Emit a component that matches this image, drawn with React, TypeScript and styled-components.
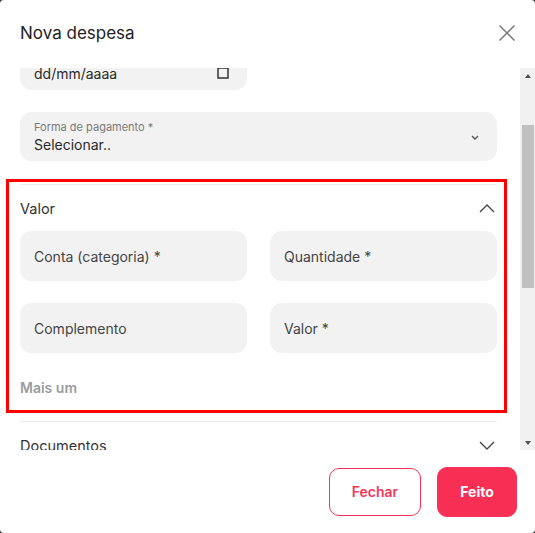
import { useLayoutEffect, useRef, useState } from "react";
import styled, { createGlobalStyle } from "styled-components";

const GlobalStyle = createGlobalStyle`
  * {
    box-sizing: border-box;
  }
  body {
    margin: 0;
    background: #3a3a3a;
    font-family: Inter, "Noto Sans", sans-serif;
  }
`;

export const Modal = styled.div`
  display: flex;
  flex-direction: column;
  width: 535px;
  height: 533px;
  background: #fff;
  border-radius: 4px;
  overflow: hidden;
`;

export const Header = styled.div`
  display: flex;
  align-items: center;
  justify-content: space-between;
  height: 68px;
  padding: 0 19px 3px 20px;
  flex-shrink: 0;
`;

export const Title = styled.h2`
  margin: 0;
  font-size: 17px;
  font-weight: 400;
  color: #222;
`;

export const CloseBtn = styled.button`
  display: flex;
  padding: 0;
  border: none;
  background: none;
  cursor: pointer;
`;

export const BodyRow = styled.div`
  display: flex;
  flex: 1;
  min-height: 0;
`;

export const Body = styled.div`
  flex: 1;
  overflow: hidden;
  padding: 0 23px 0 20px;
`;

export const Rail = styled.div`
  display: flex;
  flex-direction: column;
  width: 15px;
  flex-shrink: 0;
  background: #f1f1f1;
`;

export const RailBtn = styled.div<{ $down?: boolean }>`
  display: flex;
  align-items: center;
  justify-content: center;
  height: 15px;
  padding-left: 1px;

  &::before {
    content: "";
    border-left: 3.5px solid transparent;
    border-right: 3.5px solid transparent;
    ${(p) => (p.$down ? "border-top: 4px solid #505050;" : "border-bottom: 4px solid #505050;")}
  }
`;

export const Track = styled.div`
  position: relative;
  flex: 1;
`;

export const Thumb = styled.div`
  position: absolute;
  left: 2px;
  right: 1px;
  background: #c1c1c1;
`;

export const Stack = styled.div`
  display: flex;
  flex-direction: column;
  gap: 22px;
`;

export const Grid = styled.div`
  display: grid;
  grid-template-columns: 1fr 1fr;
  gap: 22px 23px;
`;

export const Field = styled.div<{ $tall?: boolean }>`
  display: flex;
  align-items: center;
  justify-content: space-between;
  height: ${(p) => (p.$tall ? "49px" : "50px")};
  padding: 0 18px 0 14px;
  border-radius: 12px;
  background: #f2f2f2;
  color: #444;
  font-size: 14px;
`;

export const FieldText = styled.div`
  display: flex;
  flex-direction: column;
  justify-content: center;
`;

export const Label = styled.span`
  font-size: 11px;
  line-height: 15px;
  color: #7a7a7a;
`;

export const Value = styled.span`
  font-size: 14px;
  line-height: 19px;
  color: #2a2a2a;
`;

export const IconSlot = styled.span<{ $offset?: number }>`
  display: flex;
  margin-top: ${(p) => p.$offset ?? 0}px;
`;

export const Section = styled.div<{ $gapAbove?: boolean }>`
  margin-top: ${(p) => (p.$gapAbove ? "23px" : "0")};
  border-top: 1px solid #ececec;
`;

export const Highlight = styled.div`
  position: relative;

  &::after {
    content: "";
    position: absolute;
    top: -6px;
    left: -14px;
    right: -10px;
    bottom: 8px;
    border: 3px solid #ff0000;
    pointer-events: none;
  }
`;

export const SectionHead = styled.div`
  display: flex;
  align-items: center;
  justify-content: space-between;
  height: 46px;
  padding-right: 2px;
  font-size: 14.5px;
  color: #333;
`;

export const AddMore = styled.div`
  padding: 23px 0 21px;
  font-size: 14px;
  line-height: 24px;
  font-weight: 600;
  color: #9b9b9b;
`;

export const Dropzone = styled.div`
  height: 140px;
  margin-bottom: 22px;
  border: 1px dashed #d5d5d5;
  border-radius: 12px;
`;

export const Spacer = styled.div`
  height: 70px;
`;

export const Footer = styled.div`
  display: flex;
  align-items: center;
  justify-content: flex-end;
  gap: 16px;
  height: 83px;
  padding: 0 18px 0 0;
  flex-shrink: 0;
`;

export const Button = styled.button<{ $primary?: boolean }>`
  width: ${(p) => (p.$primary ? "80px" : "92px")};
  height: ${(p) => (p.$primary ? "50px" : "48px")};
  border-radius: 10px;
  border: 1px solid #f4345a;
  background: ${(p) => (p.$primary ? "#f72f55" : "#fff")};
  color: ${(p) => (p.$primary ? "#fff" : "#f0385c")};
  font-family: Inter, "Noto Sans", sans-serif;
  font-size: 14px;
  font-weight: ${(p) => (p.$primary ? 700 : 600)};
  cursor: pointer;
`;

const Chevron = ({ up, small }: { up?: boolean; small?: boolean }) =>
  small ? (
    <svg width="8" height="5" viewBox="0 0 8 5" fill="none">
      <path d="M1 1l3 3 3-3" stroke="#555" strokeWidth="1.4" />
    </svg>
  ) : (
    <svg width="16" height="9" viewBox="0 0 16 9" fill="none">
      <path d={up ? "M1 8l7-7 7 7" : "M1 1l7 7 7-7"} stroke="#444" strokeWidth="1.3" />
    </svg>
  );

export default function App() {
  const bodyRef = useRef<HTMLDivElement>(null);
  const trackRef = useRef<HTMLDivElement>(null);
  const [thumb, setThumb] = useState({ top: 0, height: 0 });

  useLayoutEffect(() => {
    const body = bodyRef.current;
    const track = trackRef.current;
    if (!body || !track) return;
    body.scrollTop = 99;
    const trackLen = track.clientHeight;
    const height = Math.round((trackLen * body.clientHeight) / body.scrollHeight);
    const maxScroll = body.scrollHeight - body.clientHeight;
    const top = Math.round(((trackLen - height) * body.scrollTop) / maxScroll);
    setThumb({ top, height });
  }, []);

  return (
    <>
      <GlobalStyle />
      <Modal>
        <Header>
          <Title>Nova despesa</Title>
          <CloseBtn>
            <svg width="18" height="18" viewBox="0 0 18 18" fill="none">
              <path d="M1.5 1.5l15 15M16.5 1.5l-15 15" stroke="#7a7a7a" strokeWidth="1.5" />
            </svg>
          </CloseBtn>
        </Header>

        <BodyRow>
          <Body ref={bodyRef}>
            <Stack>
              <Grid>
                <Field>Descrição *</Field>
                <Field>Fornecedor</Field>
                <Field $tall>
                  <FieldText>
                    <Label>Data *</Label>
                    <Value>dd/mm/aaaa</Value>
                  </FieldText>
                  <IconSlot $offset={14}>
                    <svg width="12" height="12" viewBox="0 0 12 12" fill="none">
                      <rect x="1" y="1" width="10" height="10" stroke="#333" strokeWidth="1.5" />
                    </svg>
                  </IconSlot>
                </Field>
              </Grid>

              <Field $tall>
                <FieldText>
                  <Label>Forma de pagamento *</Label>
                  <Value>Selecionar..</Value>
                </FieldText>
                <IconSlot $offset={1}>
                  <Chevron small />
                </IconSlot>
              </Field>
            </Stack>

            <Section $gapAbove>
              <Highlight>
                <SectionHead>
                  Valor
                  <Chevron up />
                </SectionHead>
                <Grid>
                  <Field>Conta (categoria) *</Field>
                  <Field>Quantidade *</Field>
                  <Field>Complemento</Field>
                  <Field>Valor *</Field>
                </Grid>
                <AddMore>Mais um</AddMore>
              </Highlight>
            </Section>

            <Section>
              <SectionHead>
                Documentos
                <Chevron />
              </SectionHead>
              <Dropzone />
            </Section>

            <Section>
              <SectionHead>
                Observações
                <Chevron />
              </SectionHead>
            </Section>

            <Section>
              <SectionHead>
                Rateio
                <Chevron />
              </SectionHead>
            </Section>

            <Spacer />
          </Body>

          <Rail>
            <RailBtn />
            <Track ref={trackRef}>
              <Thumb style={{ top: thumb.top, height: thumb.height }} />
            </Track>
            <RailBtn $down />
          </Rail>
        </BodyRow>

        <Footer>
          <Button>Fechar</Button>
          <Button $primary>Feito</Button>
        </Footer>
      </Modal>
    </>
  );
}
